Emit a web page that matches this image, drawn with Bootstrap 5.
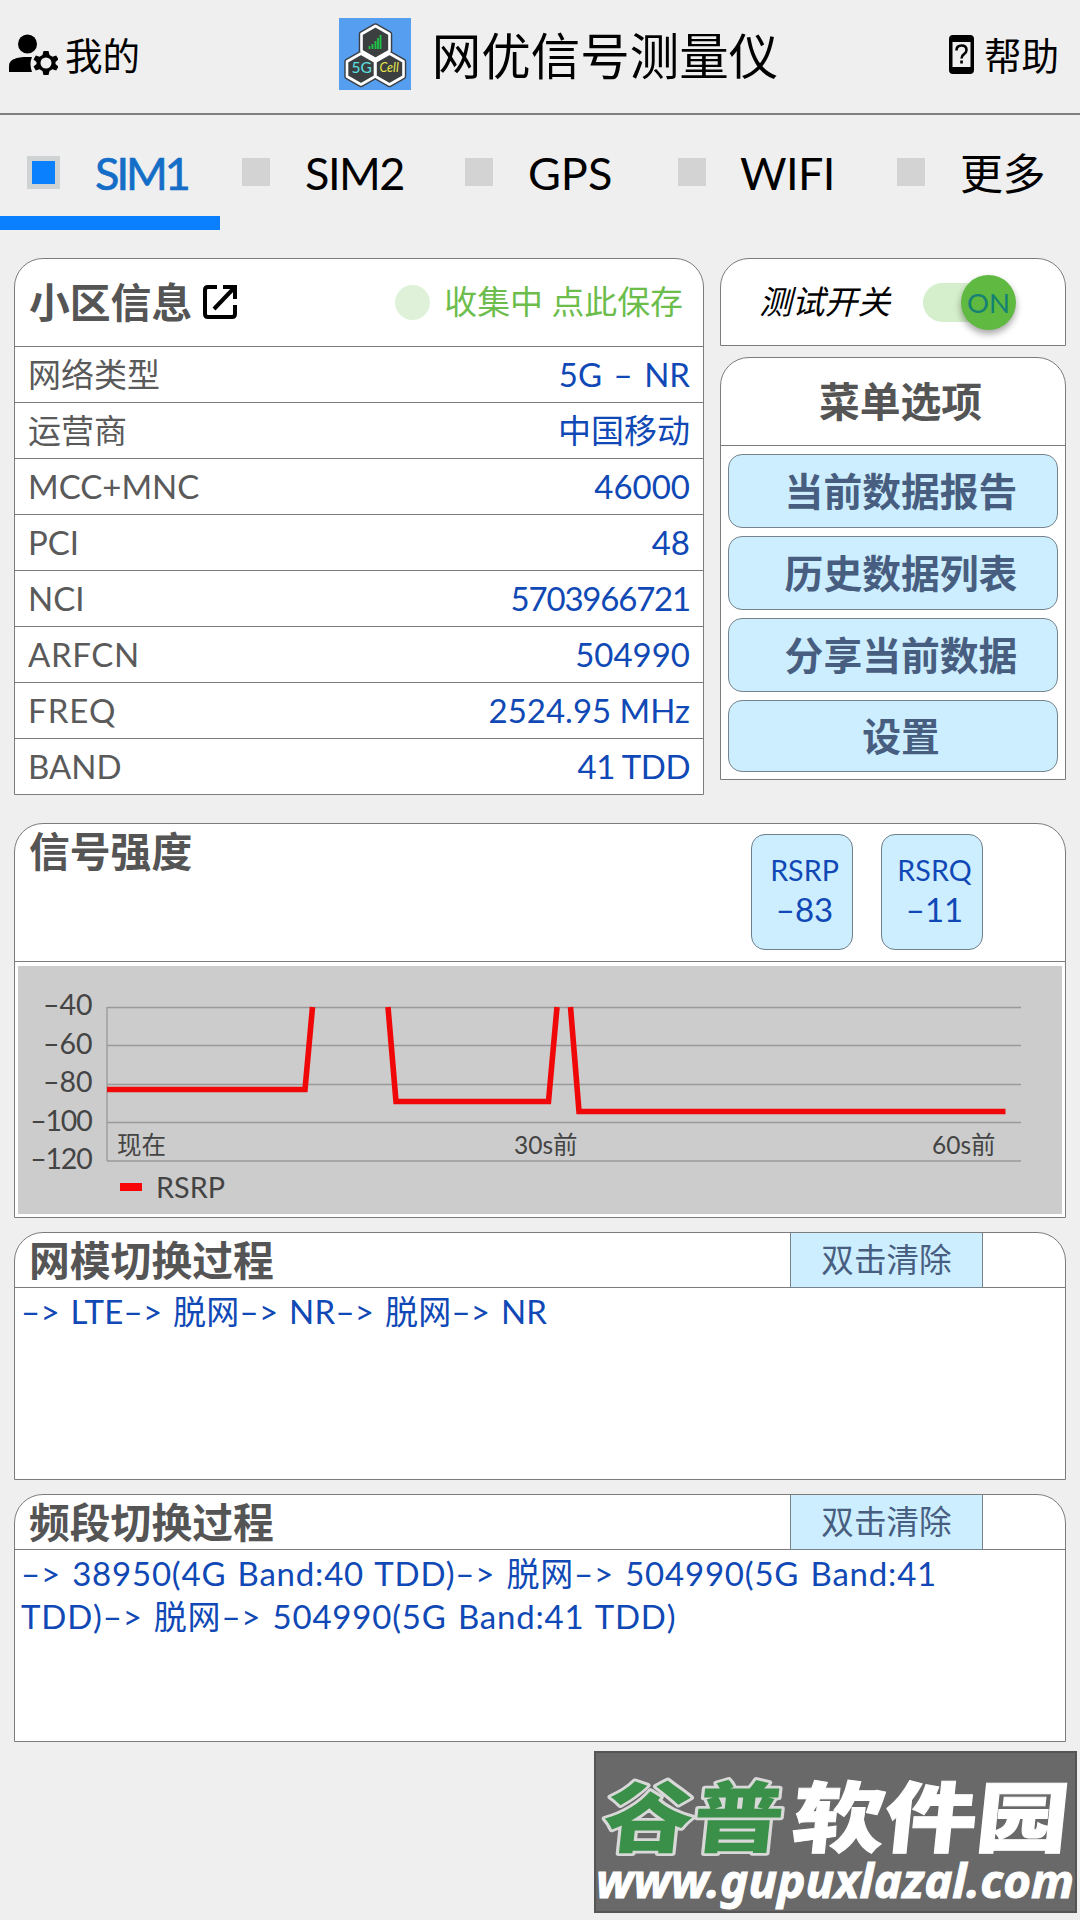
<!DOCTYPE html>
<html lang="zh-CN">
<head>
<meta charset="utf-8">
<meta name="viewport" content="width=device-width, initial-scale=1">
<title>网优信号测量仪</title>
<link href="https://cdn.jsdelivr.net/npm/bootstrap@5.3.0/dist/css/bootstrap.min.css" rel="stylesheet">
<style>
body{background:#efefef;font-family:Lato,"Noto Sans CJK SC",sans-serif;font-size:33px;line-height:1.2;color:#000;width:1080px;height:1920px;overflow:hidden}
.topbar{height:115px;border-bottom:2px solid #808080;padding:0 21px 3px 8px}
.topbar .side{font-size:37.5px}
.topbar .app-title{font-size:49.5px;line-height:60px}
.tabs-bar{height:115px;font-size:45px}
.tabs-bar .tab{height:115px;padding-top:43px;position:relative}
.tabs-bar .tab span{line-height:32px;height:32px;letter-spacing:-.6px}
.tabs-bar .tab-on span{letter-spacing:-3px}
.sq{width:28px;height:28px;background:#d3d3d3;flex:none}
.tab-on{border-bottom:14px solid #0a80ff;color:#146dc6}
.tab-on .sq{width:33px;height:33px;background:#0a80ff;border:5px solid #d0d3d4}
.panel{background:#fff;border:1.5px solid #7c7c7c;border-radius:29px 29px 0 0;overflow:hidden}
.panel-title{font-weight:700;font-size:40.8px;color:#555;line-height:49px}
.info-head{height:87px;padding:0 20px 1px 14px}
.info-row{height:56px;border-top:1.5px solid #7c7c7c;padding:1px 13px 0 13px;color:#5a5a5a}
.info-row b{font-weight:400;color:#1049b5}
.saving{font-size:32.9px;color:#6cbd4c}
.pulse{width:35px;height:35px;border-radius:50%;background:#dff2d9}
.toggle{width:93px;height:55px}
.track{width:70px;height:39px;border-radius:20px;background:#d5eecb;top:8px;left:0}
.knob{width:55px;height:55px;border-radius:50%;background:#60b941;color:#158074;font-size:27.5px;right:0;top:0;box-shadow:0 4px 7px rgba(0,0,0,.35)}
.menu-btn{height:74px;border:1.5px solid #76838b;border-radius:14px;background:#cdeeff;color:#485e80;font-weight:700;font-size:38.8px;padding:1px 0 0 16px;line-height:1}
.menu-btn:last-child{height:72px}
.metric{width:102px;height:116px;border:1.5px solid #6c7f8a;border-radius:14px;background:#cdeeff;color:#1049b5;padding-left:5px}
.metric small{font-size:28.7px;line-height:34px}
.metric div{line-height:45px}
.clear-btn{width:193px;height:55px;border:1.5px solid #76838b;border-radius:0;border-top:0;background:#cdeeff;color:#485e80;font-size:32.6px;line-height:1;margin-right:82px;padding:1px 0 0}
.log{border-top:1.5px solid #7c7c7c;color:#1049b5;line-height:42.5px;padding:2px 90px 0 6px;word-spacing:2px;letter-spacing:.25px;white-space:nowrap}
.log-band{word-spacing:2px;letter-spacing:.8px}
.mark-box{width:483px;height:162px;background:#696969;margin:9px 3px 0 auto}
</style>
</head>
<body>
<header class="topbar d-flex align-items-center justify-content-between">
  <div class="side d-flex align-items-center">
    <svg width="50" height="42" viewBox="0 0 50 42"><circle cx="19.500" cy="10" r="9.500"/><path d="M1 38V32C1 25 9 23 19 23H24Q21 30 24 38Z"/><g transform="translate(38 29)"><path fill-rule="evenodd" d="M-2.500-12h5l1 4 3 1.700 3.700-1.300 2.300 4-3 2.600v2l3 2.600-2.300 4-3.700-1.300-3 1.700-1 4h-5l-1-4-3-1.700-3.700 1.300-2.300-4 3-2.600v-2l-3-2.600 2.300-4 3.700 1.300 3-1.700zM0-5.500a5.500 5.500 0 1 0 0 11a5.500 5.500 0 1 0 0-11z"/></g></svg>
    <span style="margin-left:7px">我的</span>
  </div>
  <div class="d-flex align-items-center" style="margin-left:28px">
    <svg width="72" height="72" viewBox="0 0 72 72" style="margin-top:-2px"><path fill="#559ef0" d="M0 0h72v72H0z"/><g stroke-linejoin="round"><g fill="#3c4046" stroke="#3c4046" stroke-width="5.500"><path d="M36.500 8l14 8v17l-14 8-14-8V16z"/><path d="M22 35.500l14 8v15l-14 8-14-8v-15z"/><path d="M50.500 35.500l14 8v15l-14 8-14-8v-15z"/></g><g fill="#3b3f3f" stroke="#fff" stroke-width="2.600"><path d="M36.500 8l14 8v17l-14 8-14-8V16z"/><path d="M22 35.500l14 8v15l-14 8-14-8v-15z"/><path d="M50.500 35.500l14 8v15l-14 8-14-8v-15z"/></g></g><path d="M30.500 31v-3M33.500 31v-5M36.500 31v-8M39 31V20M41.500 31V17" stroke="#1fc648" stroke-width="1.800"/><text x="12.500" y="54.500" font-family="Lato" font-size="15.500" fill="#5be0e4">5G</text><text x="40.500" y="54" font-family="Lato" font-style="italic" font-size="12.500" fill="#e9e94e">Cell</text></svg>
    <span class="app-title" style="margin-left:21px;padding-top:2px">网优信号测量仪</span>
  </div>
  <div class="side d-flex align-items-center">
    <svg width="25" height="39" viewBox="0 0 25 39" style="margin-top:-2px"><path fill-rule="evenodd" d="M4 0h17q4 0 4 4v31q0 4-4 4H4q-4 0-4-4V4q0-4 4-4zM3.500 7v25h18V7z"/><path d="M7.500 15.500q0-5 5-5t5 4.500q0 2.500-2.500 4.200t-2.500 4.300" fill="none" stroke="#000" stroke-width="2.600"/><path d="M11.200 25.500h2.700v3h-2.700z"/></svg>
    <span style="margin-left:10px">帮助</span>
  </div>
</header>

<nav class="tabs-bar d-flex">
  <div class="tab tab-on d-flex align-items-start" style="width:220px;padding-left:27px;padding-top:41px"><i class="sq"></i><span style="margin:1px 0 0 35px;-webkit-text-stroke:.7px #146dc6">SIM1</span></div>
  <div class="tab d-flex align-items-start" style="width:223px;padding-left:22px"><i class="sq"></i><span style="margin:-1px 0 0 35px;letter-spacing:-1.500px">SIM2</span></div>
  <div class="tab d-flex align-items-start" style="width:213px;padding-left:22px"><i class="sq"></i><span style="margin:-1px 0 0 35px;letter-spacing:0">GPS</span></div>
  <div class="tab d-flex align-items-start" style="width:219px;padding-left:22px"><i class="sq"></i><span style="margin:-1px 0 0 34px">WIFI</span></div>
  <div class="tab d-flex align-items-start" style="width:205px;padding-left:22px"><i class="sq"></i><span style="margin-left:35px;font-size:43px">更多</span></div>
</nav>

<main style="padding:28px 14px 0">
  <div class="d-flex justify-content-between align-items-start">
    <section class="panel" style="width:690px;height:537px">
      <div class="info-head d-flex align-items-center">
        <span class="panel-title">小区信息</span>
        <svg width="38" height="38" viewBox="0 0 38 38" fill="none" stroke="#000" stroke-width="4" style="margin-left:9px"><path d="M16 4H7Q4 4 4 7v24q0 3 3 3h24q3 0 3-3V22M22 4h12v12M34 4L13 26"/></svg>
        <span class="pulse ms-auto"></span>
        <span class="saving" style="margin-left:14px">收集中 点此保存</span>
      </div>
      <div class="info-row d-flex align-items-center justify-content-between"><span>网络类型</span><b style="word-spacing:3px">5G – NR</b></div>
      <div class="info-row d-flex align-items-center justify-content-between"><span>运营商</span><b>中国移动</b></div>
      <div class="info-row d-flex align-items-center justify-content-between"><span>MCC+MNC</span><b>46000</b></div>
      <div class="info-row d-flex align-items-center justify-content-between"><span>PCI</span><b>48</b></div>
      <div class="info-row d-flex align-items-center justify-content-between"><span>NCI</span><b style="letter-spacing:-1.200px">5703966721</b></div>
      <div class="info-row d-flex align-items-center justify-content-between"><span style="letter-spacing:.6px">ARFCN</span><b>504990</b></div>
      <div class="info-row d-flex align-items-center justify-content-between"><span style="letter-spacing:1px">FREQ</span><b>2524.95 MHz</b></div>
      <div class="info-row d-flex align-items-center justify-content-between"><span>BAND</span><b style="letter-spacing:-.5px">41 TDD</b></div>
    </section>

    <div class="d-flex flex-column" style="width:346px;gap:11px">
      <section class="panel d-flex align-items-center justify-content-between" style="height:88px;padding:0 49px 0 38px">
        <span class="fst-italic" style="font-size:32.800px">测试开关</span>
        <span class="toggle position-relative"><i class="track position-absolute"></i><span class="knob position-absolute d-flex align-items-center justify-content-center">ON</span></span>
      </section>
      <section class="panel" style="height:423px">
        <div class="panel-title text-center" style="height:87px;line-height:87px;padding-left:15px">菜单选项</div>
        <div class="d-flex flex-column" style="border-top:1.500px solid #7c7c7c;padding:8px 7px;gap:8px">
          <button class="btn menu-btn">当前数据报告</button>
          <button class="btn menu-btn">历史数据列表</button>
          <button class="btn menu-btn">分享当前数据</button>
          <button class="btn menu-btn">设置</button>
        </div>
      </section>
    </div>
  </div>

  <section class="panel" style="height:395px;margin-top:28px">
    <div class="d-flex align-items-start" style="height:137px;padding:3px 82px 0 14px">
      <span class="panel-title me-auto">信号强度</span>
      <div class="metric d-flex flex-column align-items-center" style="margin-top:7px;padding-top:18px"><small>RSRP</small><div>–83</div></div>
      <div class="metric d-flex flex-column align-items-center" style="margin:7px 0 0 28px;padding-top:18px"><small>RSRQ</small><div>–11</div></div>
    </div>
    <div style="border-top:1.500px solid #7c7c7c;padding:4px 3px">
      <svg class="d-block" width="1044" height="248" viewBox="18 966 1044 248" font-family="Lato,'Noto Sans CJK SC',sans-serif" fill="#444">
        <path fill="#ccc" d="M18 966h1044v248H18z"/>
        <path d="M107 1007.500H1021M107 1045.500H1021M107 1084.500H1021M107 1122.500H1021M107 1161H1021M107 1007V1161" stroke="#999" stroke-width="1.300" fill="none"/>
        <g font-size="28.500" text-anchor="end">
          <text x="92.500" y="1015">–40</text>
          <text x="92.500" y="1054">–60</text>
          <text x="92.500" y="1092">–80</text>
          <text x="91.500" y="1131" letter-spacing="-1.200">–100</text>
          <text x="91.500" y="1169" letter-spacing="-1.200">–120</text>
        </g>
        <g font-size="24.500"><text x="117" y="1154">现在</text><text x="514" y="1154">30s前</text><text x="932" y="1154">60s前</text></g>
        <g fill="none" stroke="#f00808" stroke-width="5.600"><path d="M107 1089.500H305L312.500 1007"/><path d="M388 1007L396 1101.500H548.500L557 1007"/><path d="M570.500 1007L579 1111.500H1005.500"/></g>
        <path fill="#fa0505" d="M120 1183h22v8h-22z"/>
        <text x="156" y="1198" font-size="28.800">RSRP</text>
      </svg>
    </div>
  </section>

  <section class="panel" style="height:248px;margin-top:14px">
    <div class="d-flex align-items-start justify-content-between" style="height:54px;padding-left:14px">
      <span class="panel-title" style="padding-top:3px">网模切换过程</span>
      <button class="btn clear-btn">双击清除</button>
    </div>
    <div class="log">–&gt; LTE–&gt; 脱网–&gt; NR–&gt; 脱网–&gt; NR</div>
  </section>

  <section class="panel" style="height:248px;margin-top:14px">
    <div class="d-flex align-items-start justify-content-between" style="height:54px;padding-left:14px">
      <span class="panel-title" style="padding-top:3px">频段切换过程</span>
      <button class="btn clear-btn">双击清除</button>
    </div>
    <div class="log log-band">–&gt; 38950(4G Band:40 TDD)–&gt; 脱网–&gt; 504990(5G Band:41<br>TDD)–&gt; 脱网–&gt; 504990(5G Band:41 TDD)</div>
  </section>
</main>

<footer class="mark-box">
  <svg class="d-block" width="483" height="162" viewBox="0 0 483 162" font-family="'Noto Sans CJK SC',sans-serif" font-weight="900">
    <rect x="1" y="1" width="481" height="160" fill="none" stroke="#555" stroke-width="2"/>
    <g transform="translate(0 95) skewX(-6)" font-size="77">
      <text x="7" y="0" textLength="180" lengthAdjust="spacingAndGlyphs" fill="#3a9048" stroke="#d8d8d8" stroke-width="5.500" stroke-linejoin="round" paint-order="stroke">谷普</text>
      <text x="196" y="0" textLength="276" lengthAdjust="spacingAndGlyphs" fill="#fff" stroke="#fff" stroke-width="1">软件园</text>
    </g>
    <text x="2" y="146.500" font-family="'Noto Sans','Open Sans',sans-serif" font-weight="700" font-style="italic" font-size="46" textLength="478" lengthAdjust="spacingAndGlyphs" fill="#fff" stroke="#fff">www.gupuxlazal.com</text>
  </svg>
</footer>
<script src="https://cdn.jsdelivr.net/npm/bootstrap@5.3.0/dist/js/bootstrap.bundle.min.js"></script>
</body>
</html>
